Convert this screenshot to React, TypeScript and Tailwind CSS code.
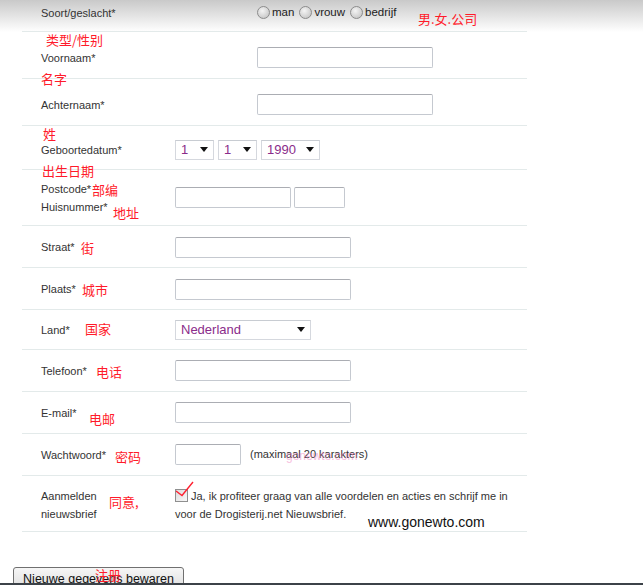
import React from 'react';

const inputCls =
	'h-[21px] border border-[#c5c9d0] border-t-[#abadb3] rounded-[2px] bg-white';

const FakeSelect = ({ value, width }: { value: string; width: string }) => (
	<div
		className={`${width} h-[20px] flex items-center justify-between border border-[#d5d8de] border-t-[#c8ccd2] bg-white pl-[5px] pr-[5px] text-[13px] text-[#8a2c8a]`}
	>
		<span>{value}</span>
		<svg width="8" height="5" viewBox="0 0 8 5">
			<path d="M0 0h8L4 5z" fill="#111" />
		</svg>
	</div>
);

const Radio = () => (
	<span className="inline-block w-[13px] h-[13px] rounded-full border border-[#8c8c8c] bg-[radial-gradient(circle_at_40%_35%,#f4f4f4,#bdbdbd)]" />
);

const Row = ({
	label,
	h,
	wide,
	extra,
	children,
}: {
	label: React.ReactNode;
	h: string;
	wide?: boolean;
	extra?: string;
	children?: React.ReactNode;
}) => (
	<div className={`flex items-center border-b border-[#e3eaea] ${h} ${extra ?? ''}`}>
		<div className={`${wide ? 'w-[235px]' : 'w-[153px]'} shrink-0 pl-[19px] leading-[18px]`}>{label}</div>
		{children}
	</div>
);

// red annotations drawn over the form
const notes: { t: string; x: string; y: string }[] = [
	{ t: '男.女.公司', x: 'left-[418px]', y: 'top-[11px]' },
	{ t: '类型/性别', x: 'left-[46px]', y: 'top-[32px]' },
	{ t: '名字', x: 'left-[41px]', y: 'top-[71px]' },
	{ t: '姓', x: 'left-[43px]', y: 'top-[126px]' },
	{ t: '出生日期', x: 'left-[42px]', y: 'top-[163px]' },
	{ t: '部编', x: 'left-[92px]', y: 'top-[182px]' },
	{ t: '地址', x: 'left-[113px]', y: 'top-[205px]' },
	{ t: '街', x: 'left-[81px]', y: 'top-[240px]' },
	{ t: '城市', x: 'left-[82px]', y: 'top-[282px]' },
	{ t: '国家', x: 'left-[85px]', y: 'top-[321px]' },
	{ t: '电话', x: 'left-[96px]', y: 'top-[364px]' },
	{ t: '电邮', x: 'left-[89px]', y: 'top-[411px]' },
	{ t: '密码', x: 'left-[115px]', y: 'top-[449px]' },
	{ t: '同意,', x: 'left-[109px]', y: 'top-[494px]' },
	{ t: '注册', x: 'left-[95px]', y: 'top-[567px]' },
];

export default function App() {
	return (
		<div className="relative h-[585px] w-full overflow-hidden bg-[linear-gradient(to_bottom,#c9c9c9,#ffffff_32px)] font-['Liberation_Sans',Arial,sans-serif] text-[11px] text-[#333]">
			<div className="ml-[22px] w-[505px]">
				<Row label="Soort/geslacht*" h="h-[32px]" wide extra="pb-[6px]">
					<div className="flex items-center gap-[2px] text-[11.5px] text-[#222]">
						<Radio />
						<span className="mr-[3px]">man</span>
						<Radio />
						<span className="mr-[3px]">vrouw</span>
						<Radio />
						<span>bedrijf</span>
					</div>
				</Row>
				<Row label="Voornaam*" h="h-[47px]" wide extra="pt-[5px]">
					<div className={`${inputCls} w-[176px]`} />
				</Row>
				<Row label="Achternaam*" h="h-[47px]" wide extra="pt-[5px]">
					<div className={`${inputCls} w-[176px]`} />
				</Row>
				<Row label="Geboortedatum*" h="h-[44px]" extra="pt-[4px]">
					<div className="flex gap-[4px]">
						<FakeSelect value="1" width="w-[39px]" />
						<FakeSelect value="1" width="w-[39px]" />
						<FakeSelect value="1990" width="w-[59px]" />
					</div>
				</Row>
				<Row
					label={
						<>
							<div>Postcode*</div>
							<div>Huisnummer*</div>
						</>
					}
					h="h-[56px]"
				>
					<div className="flex gap-[3px]">
						<div className={`${inputCls} w-[116px]`} />
						<div className={`${inputCls} w-[51px]`} />
					</div>
				</Row>
				<Row label="Straat*" h="h-[42px]" extra="pt-[1px]">
					<div className={`${inputCls} w-[176px]`} />
				</Row>
				<Row label="Plaats*" h="h-[42px]" extra="pt-[1px]">
					<div className={`${inputCls} w-[176px]`} />
				</Row>
				<Row label="Land*" h="h-[40px]">
					<FakeSelect value="Nederland" width="w-[136px]" />
				</Row>
				<Row label="Telefoon*" h="h-[42px]">
					<div className={`${inputCls} w-[176px]`} />
				</Row>
				<Row label="E-mail*" h="h-[42px]">
					<div className={`${inputCls} w-[176px]`} />
				</Row>
				<Row label="Wachtwoord*" h="h-[42px]">
					<div className={`${inputCls} w-[66px]`} />
					<div className="relative ml-[9px]">
						<span>(maximaal 20 karakters)</span>
						<span className="absolute left-[36px] top-[1px] text-[12px] text-[#f080c0] opacity-50">gonewto.com</span>
					</div>
				</Row>
				<div className="flex h-[56px] items-start border-b border-[#e3eaea] pt-[11px]">
					<div className="w-[153px] shrink-0 pl-[19px] leading-[18px]">
						<div>Aanmelden</div>
						<div>nieuwsbrief</div>
					</div>
					<div className="relative w-[340px] leading-[18px]">
						<span className="relative top-[2px] mr-[3px] inline-block h-[13px] w-[13px] border border-[#8f8f8f] bg-[linear-gradient(135deg,#dcdcdc,#f8f8f8)]" />
						Ja, ik profiteer graag van alle voordelen en acties en schrijf me in voor de Drogisterij.net Nieuwsbrief.
						<svg className="absolute left-[0px] top-[-6px]" width="20" height="18" viewBox="0 0 20 18">
							<path d="M1 10 L7 14.5 L18 1" fill="none" stroke="#ff2030" strokeWidth="1.4" />
						</svg>
					</div>
				</div>
			</div>

			<div className="mt-[35px] ml-[13px]">
				<button className="h-[24px] w-[171px] rounded-[3px] border border-[#707070] bg-[linear-gradient(to_bottom,#f6f6f6,#dddddd)] text-[12.5px] text-[#111]">
					Nieuwe gegevens bewaren
				</button>
			</div>

			<div className="absolute left-[368px] top-[515px] text-[14px] leading-[14px] text-[#111]">
				www.gonewto.com
			</div>

			{notes.map((n) => (
				<div
					key={n.t}
					className={`absolute ${n.x} ${n.y} font-['Noto_Sans_CJK_SC','Noto_Sans',sans-serif] text-[13px] leading-[16px] text-[#ff1a2a]`}
				>
					{n.t}
				</div>
			))}

			<div className="absolute bottom-0 left-0 h-[2px] w-full bg-[#3c4248]" />
		</div>
	);
}
